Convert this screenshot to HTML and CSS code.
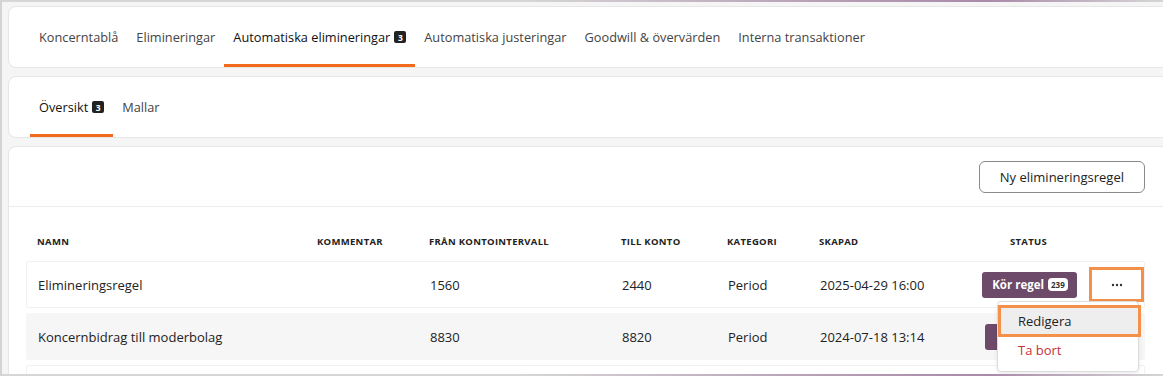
FILE: index.html
```html
<!DOCTYPE html>
<html lang="sv">
<head>
    <meta charset="UTF-8">
    <meta name="viewport" content="width=device-width, initial-scale=1.0">
    <title>Automatiska elimineringar</title>
    <link rel="stylesheet" href="styles.css">
</head>
<body>
    <div class="frame">
        <div class="edge"></div>

        <div class="page">
            <!-- Main tabs -->
            <div class="card tabs-card">
                <div class="tab">Koncerntablå</div>
                <div class="tab">Elimineringar</div>
                <div class="tab active">Automatiska elimineringar <span class="count">3</span></div>
                <div class="tab">Automatiska justeringar</div>
                <div class="tab">Goodwill &amp; övervärden</div>
                <div class="tab">Interna transaktioner</div>
            </div>

            <!-- Sub tabs -->
            <div class="card tabs-card">
                <div class="tab active">Översikt <span class="count">3</span></div>
                <div class="tab">Mallar</div>
            </div>

            <!-- Rules table -->
            <div class="card list-card">
                <div class="toolbar">
                    <button class="btn-outline">Ny elimineringsregel</button>
                </div>

                <div class="table">
                    <div class="row head">
                        <div class="cell">Namn</div>
                        <div class="cell">Kommentar</div>
                        <div class="cell">Från kontointervall</div>
                        <div class="cell">Till konto</div>
                        <div class="cell">Kategori</div>
                        <div class="cell">Skapad</div>
                        <div class="cell center">Status</div>
                        <div class="cell"></div>
                    </div>

                    <div class="row">
                        <div class="cell">Elimineringsregel</div>
                        <div class="cell"></div>
                        <div class="cell">1560</div>
                        <div class="cell">2440</div>
                        <div class="cell">Period</div>
                        <div class="cell">2025-04-29 16:00</div>
                        <div class="cell center">
                            <button class="btn-run">Kör regel <span class="run-count">239</span></button>
                        </div>
                        <div class="cell actions">
                            <button class="btn-more highlight">
                                <svg width="12" height="4" viewBox="0 0 12 4"><circle cx="2" cy="2" r="1.2"/><circle cx="6" cy="2" r="1.2"/><circle cx="10" cy="2" r="1.2"/></svg>
                            </button>
                            <div class="menu">
                                <div class="menu-item hover">Redigera</div>
                                <div class="menu-item danger">Ta bort</div>
                            </div>
                        </div>
                    </div>

                    <div class="row alt">
                        <div class="cell">Koncernbidrag till moderbolag</div>
                        <div class="cell"></div>
                        <div class="cell">8830</div>
                        <div class="cell">8820</div>
                        <div class="cell">Period</div>
                        <div class="cell">2024-07-18 13:14</div>
                        <div class="cell center">
                            <button class="btn-run hidden-label"><span class="run-label">Kör regel</span> <span class="run-count">4</span></button>
                        </div>
                        <div class="cell actions"></div>
                    </div>

                    <div class="row"></div>
                </div>
            </div>
        </div>

        <div class="edge"></div>
    </div>
</body>
</html>
```

FILE: styles.css
```css
* {
    box-sizing: border-box;
    margin: 0;
    padding: 0;
}
body {
    width: 1163px;
    height: 376px;
    overflow: hidden;
    background-color: #f5f5f5;
    font-family: "Open Sans", Arial, sans-serif;
    color: #222;
}
.frame {
    display: flex;
    flex-direction: column;
    height: 376px;
    border-left: 2px solid #d3d3d3;
}
.edge {
    height: 2px;
    flex: none;
    background: linear-gradient(90deg, #d6d6d6 0%, #d6d6d6 45%, #b7a0b6 70%, #a98aa8 85%, #d6d6d6 100%);
}
.page {
    flex: 1;
    overflow: hidden;
    width: 1173px;
    padding: 4px 0 0 6px;
    display: flex;
    flex-direction: column;
    gap: 8px;
}
.card {
    background-color: #fff;
    border: 1px solid #e6e6e6;
    border-radius: 8px;
    flex: none;
}
/* Tabs */
.tabs-card {
    display: flex;
    height: 62px;
    padding-left: 21px;
}
.tab {
    display: flex;
    align-items: center;
    gap: 4px;
    padding: 3px 9px 0;
    border-bottom: 3px solid transparent;
    font-size: 12.75px;
    color: #444;
    white-space: nowrap;
}
.tab.active {
    color: #111;
    border-bottom-color: #f26b1d;
}
.count {
    display: inline-flex;
    align-items: center;
    justify-content: center;
    width: 12px;
    height: 12px;
    border-radius: 2px;
    background-color: #222;
    color: #fff;
    font-size: 8.5px;
    font-weight: 700;
}
/* List card */
.list-card {
    height: 260px;
    border-radius: 8px 8px 0 0;
}
.toolbar {
    display: flex;
    justify-content: flex-end;
    padding: 14px 29px 13px 0;
    border-bottom: 1px solid #ececec;
}
.btn-outline {
    height: 32px;
    padding: 0 20px;
    background-color: #fff;
    border: 1px solid #8a8a8a;
    border-radius: 6px;
    font-family: inherit;
    font-size: 13px;
    color: #222;
}
.table {
    display: flex;
    flex-direction: column;
    gap: 5px;
    padding: 25px 29px 0 17px;
}
.row {
    display: grid;
    grid-template-columns: 280px 112px 192px 106px 92px 162px 117px 58px;
    align-items: center;
    height: 47px;
    border: 1px solid #f1f1f1;
    border-radius: 2px;
    font-size: 13px;
}
.row.head {
    height: 18px;
    margin-bottom: 6px;
    border: none;
    font-size: 9.5px;
    font-weight: 700;
    text-transform: uppercase;
    letter-spacing: 0.3px;
}
.row.alt {
    background-color: #f6f6f6;
    border-color: #f6f6f6;
}
.cell {
    padding-left: 11px;
    white-space: nowrap;
}
.cell.center {
    display: flex;
    justify-content: center;
    padding-left: 0;
}
.btn-run {
    display: inline-flex;
    align-items: center;
    gap: 4px;
    height: 26px;
    padding: 0 9px 0 10px;
    background-color: #6d4a6a;
    border: none;
    border-radius: 3px;
    font-family: inherit;
    font-size: 11.5px;
    font-weight: 700;
    color: #fff;
}
.hidden-label .run-label {
    visibility: hidden;
}
.run-count {
    display: inline-flex;
    align-items: center;
    justify-content: center;
    min-width: 14px;
    height: 13px;
    padding: 0 3px;
    border-radius: 4px;
    background-color: #fff;
    color: #333;
    font-size: 8px;
    font-weight: 700;
}
/* Actions and menu */
.actions {
    position: relative;
    padding-left: 1px;
}
.btn-more {
    display: flex;
    align-items: center;
    justify-content: center;
    width: 55px;
    height: 35px;
    background-color: #fff;
    border: none;
    fill: #333;
}
.highlight {
    outline: 3px solid #f39049;
    outline-offset: -3px;
}
.menu {
    position: absolute;
    top: 34px;
    left: -91px;
    width: 142px;
    padding: 6px 0 7px;
    background-color: #fff;
    border: 1px solid #dcdcdc;
    border-radius: 4px;
    box-shadow: 0 2px 5px rgba(0, 0, 0, 0.08);
    z-index: 10;
}
.menu-item {
    height: 26px;
    display: flex;
    align-items: center;
    padding-left: 20px;
    font-size: 13px;
    color: #222;
}
.menu-item.hover {
    margin: 0 0 2px 3px;
    padding-left: 17px;
    background-color: #eeeeee;
    outline: 3px solid #f39049;
}
.menu-item.danger {
    height: 28px;
    color: #c4333b;
}
```
